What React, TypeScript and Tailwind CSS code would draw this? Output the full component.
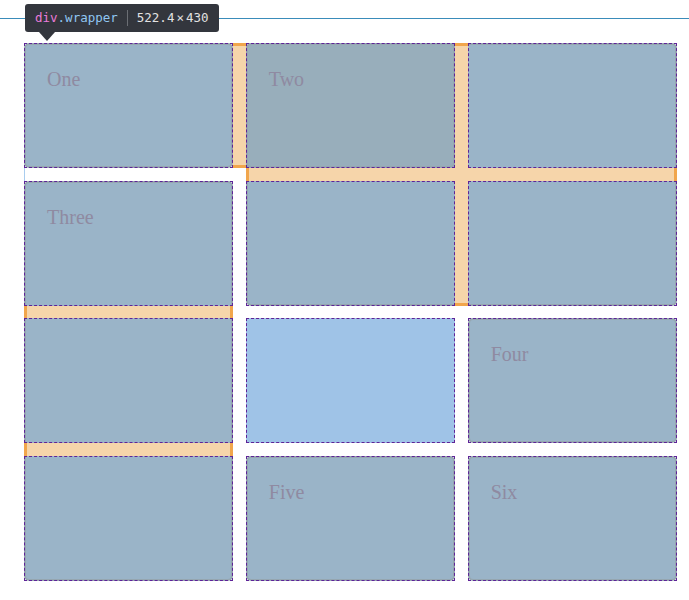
import React from "react";

const itemBase =
  "rounded-[5px] border-2 border-[#95a6b0] bg-[#9ab4c8] pl-[21px] pt-[23px] text-[20px] leading-[23px] text-[#8f8aa1] font-['Liberation_Serif',serif]";

const dashedCells = [
  "col-start-1 col-end-2 row-start-1 row-end-2",
  "col-start-3 col-end-4 row-start-1 row-end-2",
  "col-start-5 col-end-6 row-start-1 row-end-2",
  "col-start-1 col-end-2 row-start-3 row-end-4",
  "col-start-3 col-end-4 row-start-3 row-end-4",
  "col-start-5 col-end-6 row-start-3 row-end-4",
  "col-start-1 col-end-2 row-start-5 row-end-6",
  "col-start-3 col-end-4 row-start-5 row-end-6",
  "col-start-5 col-end-6 row-start-5 row-end-6",
  "col-start-1 col-end-2 row-start-7 row-end-8",
  "col-start-3 col-end-4 row-start-7 row-end-8",
  "col-start-5 col-end-6 row-start-7 row-end-8",
];

export default function App() {
  return (
    <div className="relative h-[600px] w-[689px] overflow-hidden bg-white">
      <div className="pl-[24px] pt-[43px]">
        <div className="grid w-[653px] grid-cols-[1fr_12.5px_1fr_12.5px_1fr] grid-rows-[125px_12.5px_125px_12.5px_125px_12.5px_125px]">
          {/* items */}
          <div className={`col-start-1 col-end-2 row-start-1 row-end-2 ${itemBase}`}>One</div>
          <div className={`col-start-3 col-end-6 row-start-1 row-end-4 ${itemBase}`} />
          <div className="col-start-3 col-end-4 row-start-1 row-end-2 rounded-[5px] border-2 border-[#95a6b0] bg-[#98aebb] pl-[21px] pt-[23px] text-[20px] leading-[23px] text-[#8f8aa1] font-['Liberation_Serif',serif]">
            Two
          </div>
          <div className={`col-start-1 col-end-2 row-start-3 row-end-8 ${itemBase}`}>Three</div>
          <div className="col-start-3 col-end-4 row-start-5 row-end-6 bg-[#9fc3e7]" />
          <div className={`col-start-5 col-end-6 row-start-5 row-end-6 ${itemBase}`}>Four</div>
          <div className={`col-start-3 col-end-4 row-start-7 row-end-8 ${itemBase}`}>Five</div>
          <div className={`col-start-5 col-end-6 row-start-7 row-end-8 ${itemBase}`}>Six</div>

          {/* white gap with faint line */}
          <div className="col-start-1 col-end-2 row-start-2 row-end-3 border-l border-[#a9cdef] bg-white" />

          {/* orange gaps */}
          <div className="col-start-2 col-end-3 row-start-1 row-end-2 border-y-[3px] border-[#f1a64c] bg-[#f6d5aa]" />
          <div className="col-start-4 col-end-5 row-start-1 row-end-4 border-y-[3px] border-[#f1a64c] bg-[#f6d5aa]" />
          <div className="col-start-3 col-end-6 row-start-2 row-end-3 border-x-[3px] border-[#f1a64c] bg-[#f6d5aa]" />
          <div className="col-start-1 col-end-2 row-start-4 row-end-5 border-x-[3px] border-[#f1a64c] bg-[#f6d5aa]" />
          <div className="col-start-1 col-end-2 row-start-6 row-end-7 border-x-[3px] border-[#f1a64c] bg-[#f6d5aa]" />

          {/* dashed grid lines */}
          {dashedCells.map((c) => (
            <div key={c} className={`${c} pointer-events-none border border-dashed border-[#5e2398]`} />
          ))}
        </div>
      </div>

      {/* highlight extension line */}
      <div className="absolute left-0 right-0 top-[18px] h-px bg-[#3a8cba]" />

      {/* tooltip */}
      <div className="absolute left-[25px] top-[4px] flex h-[28px] w-[194px] items-center rounded-[3px] bg-[#33363d] pl-[10px] font-['DejaVu_Sans_Mono',monospace] text-[12.5px] leading-none">
        <span className="text-[#ea7bd9]">div</span>
        <span className="text-[#90c6f2]">.wrapper</span>
        <span className="mx-[9px] h-[16px] w-px bg-[#6b6e74]" />
        <span className="text-[#e2e2e2]">
          522.4<span className="mx-[2px]">×</span>430
        </span>
      </div>
      <div className="absolute left-[39px] top-[32px] h-0 w-0 border-x-[8px] border-t-[9px] border-x-transparent border-t-[#33363d]" />
    </div>
  );
}
